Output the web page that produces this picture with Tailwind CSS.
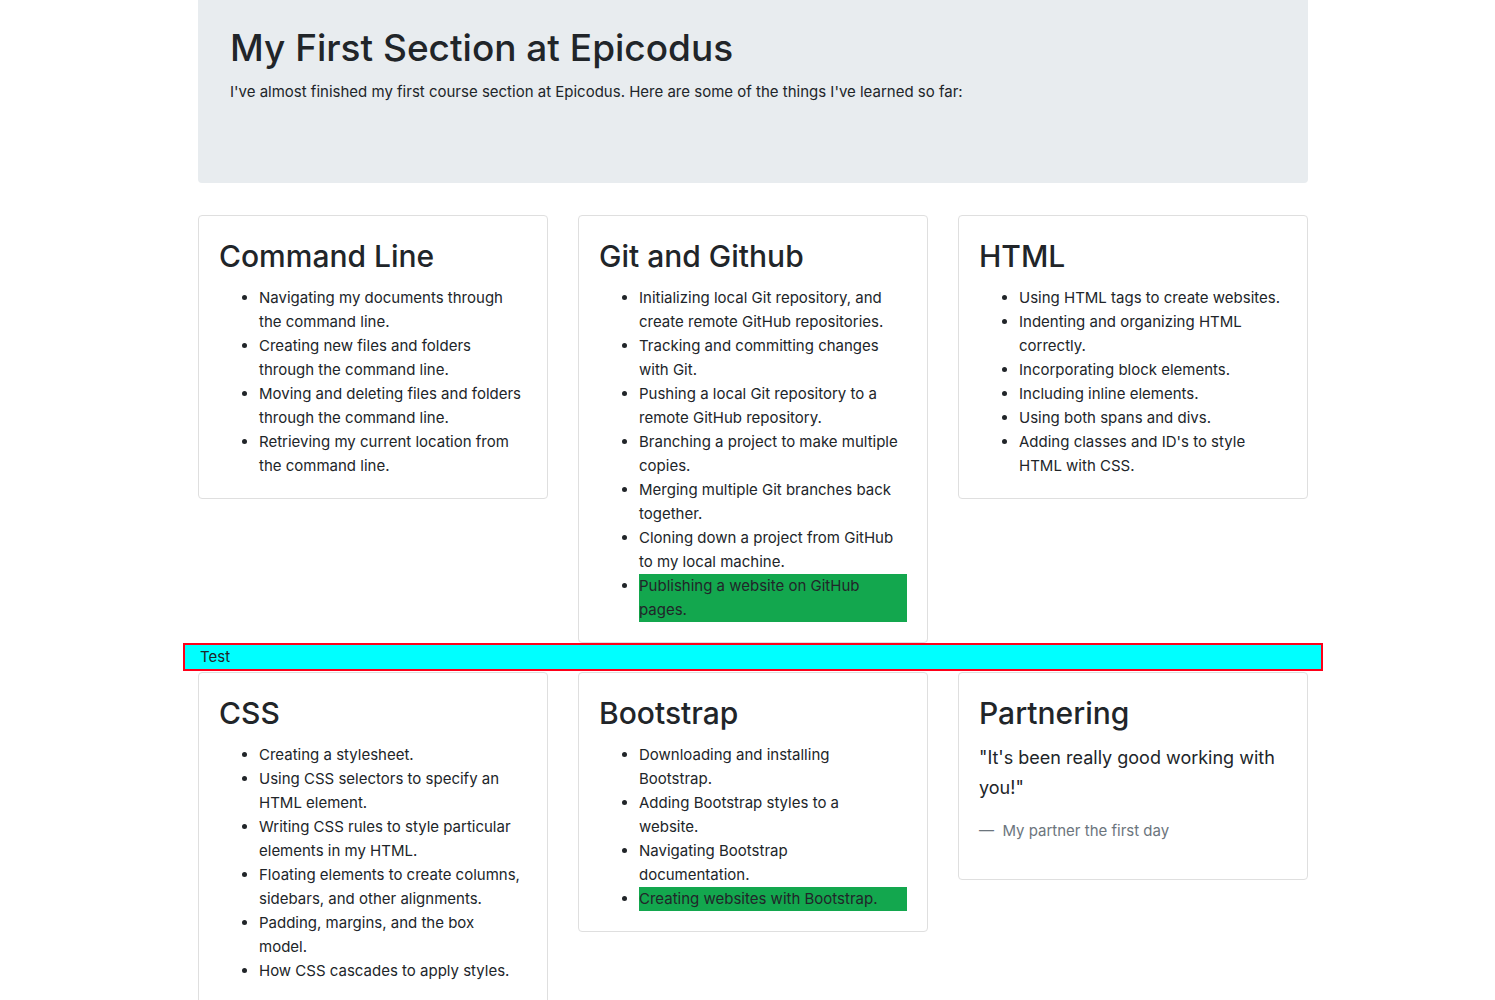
<!DOCTYPE html>
<html lang="en">
<head>
<meta charset="utf-8">
<meta name="viewport" content="width=device-width, initial-scale=1">
<title>My First Section at Epicodus</title>
<script src="https://cdn.jsdelivr.net/npm/@tailwindcss/browser@4"></script>
</head>
<body class="bg-white pl-[11px] font-[Inter,sans-serif] text-[15px] leading-6 text-[#212529]">
<main class="mx-auto max-w-[1140px]">
  <header class="mx-[15px] mb-8 rounded-b bg-[#e8ecef] px-8 pt-6 pb-[79px]">
    <h1 class="mb-2 text-[37px] leading-[48px] font-medium">My First Section at Epicodus</h1>
    <p>I've almost finished my first course section at Epicodus. Here are some of the things I've learned so far:</p>
  </header>

  <div class="grid items-start gap-x-[30px] px-[15px] md:grid-cols-3">
    <section class="rounded border border-[#dfdfdf] p-5">
      <h2 class="mb-[10px] text-[30px] leading-10 font-medium">Command Line</h2>
      <ul class="list-disc pl-10">
        <li>Navigating my documents through the command line.</li>
        <li>Creating new files and folders through the command line.</li>
        <li>Moving and deleting files and folders through the command line.</li>
        <li>Retrieving my current location from the command line.</li>
      </ul>
    </section>
    <section class="rounded border border-[#dfdfdf] p-5">
      <h2 class="mb-[10px] text-[30px] leading-10 font-medium">Git and Github</h2>
      <ul class="list-disc pl-10">
        <li>Initializing local Git repository, and create remote GitHub repositories.</li>
        <li>Tracking and committing changes with Git.</li>
        <li>Pushing a local Git repository to a remote GitHub repository.</li>
        <li>Branching a project to make multiple copies.</li>
        <li>Merging multiple Git branches back together.</li>
        <li>Cloning down a project from GitHub to my local machine.</li>
        <li class="bg-[#13a74e]">Publishing a website on GitHub pages.</li>
      </ul>
    </section>
    <section class="rounded border border-[#dfdfdf] p-5">
      <h2 class="mb-[10px] text-[30px] leading-10 font-medium">HTML</h2>
      <ul class="list-disc pl-10">
        <li>Using HTML tags to create websites.</li>
        <li>Indenting and organizing HTML correctly.</li>
        <li>Incorporating block elements.</li>
        <li>Including inline elements.</li>
        <li>Using both spans and divs.</li>
        <li>Adding classes and ID's to style HTML with CSS.</li>
      </ul>
    </section>
  </div>

  <div class="mb-px border-2 border-[#ff0019] bg-[#00ffff] px-[15px]">Test</div>

  <div class="grid items-start gap-x-[30px] px-[15px] md:grid-cols-3">
    <section class="rounded border border-[#dfdfdf] p-5">
      <h2 class="mb-[10px] text-[30px] leading-10 font-medium">CSS</h2>
      <ul class="list-disc pl-10">
        <li>Creating a stylesheet.</li>
        <li>Using CSS selectors to specify an HTML element.</li>
        <li>Writing CSS rules to style particular elements in my HTML.</li>
        <li>Floating elements to create columns, sidebars, and other alignments.</li>
        <li>Padding, margins, and the box<br>model.</li>
        <li>How CSS cascades to apply styles.</li>
      </ul>
    </section>
    <section class="rounded border border-[#dfdfdf] p-5">
      <h2 class="mb-[10px] text-[30px] leading-10 font-medium">Bootstrap</h2>
      <ul class="list-disc pl-10">
        <li>Downloading and installing<br>Bootstrap.</li>
        <li>Adding Bootstrap styles to a<br>website.</li>
        <li>Navigating Bootstrap<br>documentation.</li>
        <li class="bg-[#13a74e]">Creating websites with Bootstrap.</li>
      </ul>
    </section>
    <section class="rounded border border-[#dfdfdf] p-5">
      <h2 class="mb-[10px] text-[30px] leading-10 font-medium">Partnering</h2>
      <blockquote class="mb-4">
        <p class="mb-4 text-[18px] leading-[30px]">"It's been really good working with you!"</p>
        <footer class="text-[#6c757d]">—&nbsp; My partner the first day</footer>
      </blockquote>
    </section>
  </div>
</main>
</body>
</html>
